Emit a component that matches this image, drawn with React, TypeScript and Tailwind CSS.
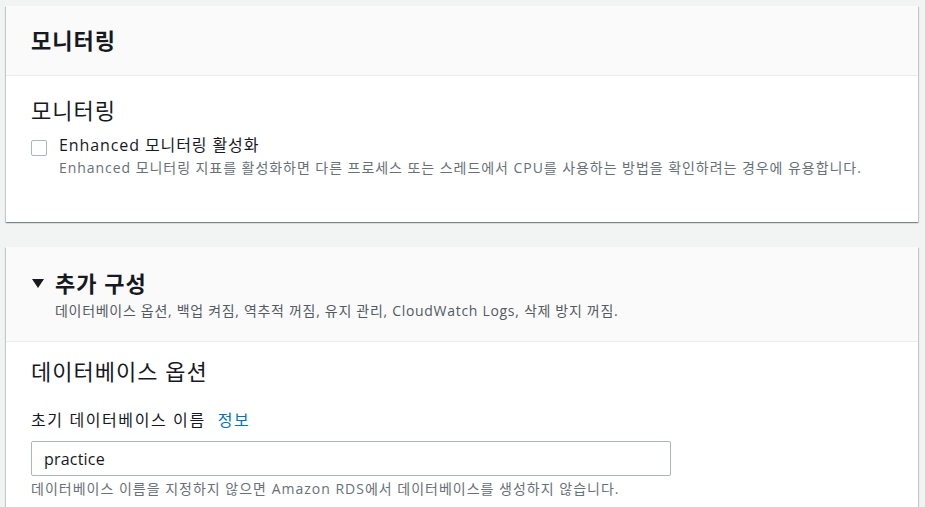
import React from 'react'

const shadow = 'shadow-[0_1px_1px_0_rgba(0,28,36,0.3),1px_1px_1px_0_rgba(0,28,36,0.15),-1px_1px_1px_0_rgba(0,28,36,0.15)]'

export default function App() {
    return (
        <div
            className="min-h-[507px] bg-[#f2f3f3] pt-[6px] pl-[6px] pr-[7px] text-[#16191f]"
            style={{ fontFamily: '"Open Sans", "Noto Sans CJK KR", sans-serif' }}
        >
            {/* 모니터링 카드 */}
            <div className={`bg-white ${shadow}`}>
                <div className="h-[70px] bg-[#fafafa] border-b border-[#eaeded] px-[25px] flex items-center">
                    <h2 className="text-[22px] font-bold leading-[28px] tracking-[1px] pb-[2px]">모니터링</h2>
                </div>
                <div className="px-[25px] pt-[20px] h-[146px]">
                    <h3 className="text-[22px] leading-[28px] tracking-[1px]">모니터링</h3>
                    <div className="flex mt-[10px]">
                        <div className="w-[16px] h-[16px] mt-[6px] border border-[#aab7b8] rounded-[2px] bg-white shrink-0" />
                        <div className="ml-[12px]">
                            <div className="text-[16px] leading-[22px] tracking-[0.9px]">Enhanced 모니터링 활성화</div>
                            <div className="mt-[2px] text-[14px] leading-[20px] tracking-[0.95px] text-[#687078]">
                                Enhanced 모니터링 지표를 활성화하면 다른 프로세스 또는 스레드에서 CPU를 사용하는 방법을 확인하려는 경우에 유용합니다.
                            </div>
                        </div>
                    </div>
                </div>
            </div>

            {/* 추가 구성 카드 */}
            <div className={`bg-white mt-[25px] ${shadow}`}>
                <div className="h-[95px] bg-[#fafafa] border-b border-[#eaeded] px-[25px] pt-[22px]">
                    <div className="flex items-center">
                        <svg width="12" height="9" viewBox="0 0 12 9" className="ml-[1px] mr-[11px] mt-[1px]">
                            <polygon points="0,0 12,0 6,9" fill="#16191f" />
                        </svg>
                        <h2 className="text-[22px] font-bold leading-[28px] tracking-[1px]">추가 구성</h2>
                    </div>
                    <div className="ml-[24px] mt-[4px] text-[14px] leading-[20px] tracking-[0.7px] text-[#545b64]">
                        데이터베이스 옵션, 백업 켜짐, 역추적 꺼짐, 유지 관리, CloudWatch Logs, 삭제 방지 꺼짐.
                    </div>
                </div>
                <div className="px-[25px] pt-[15px] pb-[20px]">
                    <h3 className="text-[22px] leading-[28px] tracking-[1px]">데이터베이스 옵션</h3>
                    <div className="mt-[24px] text-[16px] leading-[22px] tracking-[1.6px]">
                        초기 데이터베이스 이름
                        <span className="ml-[12px] text-[#0073bb]">정보</span>
                    </div>
                    <div className="mt-[10px] w-[640px] h-[35px] border border-[#aab7b8] rounded-[2px] px-[12px] flex items-center text-[16px] tracking-[0.2px]">
                        practice
                    </div>
                    <div className="mt-[3px] text-[14px] leading-[20px] tracking-[1px] text-[#687078]">
                        데이터베이스 이름을 지정하지 않으면 Amazon RDS에서 데이터베이스를 생성하지 않습니다.
                    </div>
                </div>
            </div>
        </div>
    )
}
